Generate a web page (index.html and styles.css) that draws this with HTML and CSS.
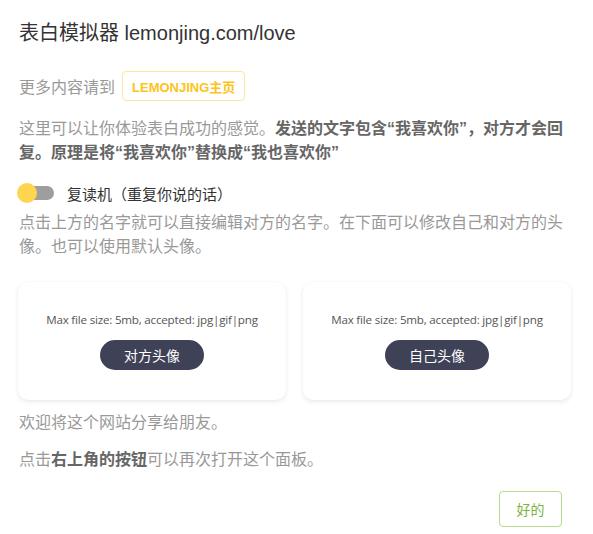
FILE: index.html
```html
<!DOCTYPE html>
<html lang="zh">
<head>
<meta charset="utf-8">
<title>表白模拟器</title>
<link rel="stylesheet" href="styles.css">
</head>
<body>
<div class="panel">
  <h1 class="title">表白模拟器 lemonjing.com/love</h1>
  <div class="more">
    <span>更多内容请到</span>
    <a class="badge">LEMONJING主页</a>
  </div>
  <p class="text intro">这里可以让你体验表白成功的感觉。<b>发送的文字包含“我喜欢你”，对方才会回复。原理是将“我喜欢你”替换成“我也喜欢你”</b></p>
  <label class="switch-row">
    <span class="switch"><span class="track"></span><span class="knob"></span></span>
    <span class="switch-label">复读机（重复你说的话）</span>
  </label>
  <p class="text tight">点击上方的名字就可以直接编辑对方的名字。在下面可以修改自己和对方的头像。也可以使用默认头像。</p>
  <div class="cards">
    <div class="card">
      <div class="hint">Max file size: 5mb, accepted: jpg|gif|png</div>
      <button class="upload">对方头像</button>
    </div>
    <div class="card">
      <div class="hint">Max file size: 5mb, accepted: jpg|gif|png</div>
      <button class="upload">自己头像</button>
    </div>
  </div>
  <p class="text share">欢迎将这个网站分享给朋友。</p>
  <p class="text reopen">点击<b>右上角的按钮</b>可以再次打开这个面板。</p>
  <div class="actions">
    <button class="ok">好的</button>
  </div>
</div>
</body>
</html>
```

FILE: styles.css
```css
* { box-sizing: border-box; }
html, body {
  margin: 0;
  padding: 0;
  background: #ffffff;
}
body {
  font-family: "Liberation Sans", "Noto Sans CJK SC", sans-serif;
  color: #999999;
}
.panel {
  width: 593px;
  padding: 20px 19px 0 19px;
}
.title {
  margin: 0;
  font-size: 20px;
  font-weight: normal;
  line-height: 26px;
  color: #333333;
}
.more {
  display: flex;
  align-items: center;
  gap: 7px;
  margin-top: 25px;
  font-size: 16px;
  color: #999999;
}
.badge {
  display: inline-flex;
  align-items: center;
  height: 30px;
  padding: 0 9px;
  border: 1px solid #fde6a0;
  border-radius: 4px;
  font-size: 13px;
  font-weight: bold;
  color: #fcc419;
}
.text {
  margin: 0;
  font-size: 16px;
  line-height: 24px;
  color: #999999;
}
.text b { color: #666666; }
.intro { margin-top: 16px; }
.switch-row {
  display: flex;
  align-items: center;
  gap: 13px;
  margin-top: 16px;
  height: 24px;
}
.switch {
  position: relative;
  width: 37px;
  height: 20px;
  flex: none;
  margin-left: -2px;
}
.track {
  position: absolute;
  left: 3px;
  top: 3px;
  width: 34px;
  height: 14px;
  border-radius: 7px;
  background: #9e9e9e;
}
.knob {
  position: absolute;
  left: 0;
  top: 0;
  width: 20px;
  height: 20px;
  border-radius: 50%;
  background: #fdd54f;
}
.switch-label {
  font-size: 15px;
  color: #333333;
}
.tight { margin-top: 6px; }
.cards {
  display: grid;
  grid-template-columns: 268px 268px;
  column-gap: 17px;
  margin-top: 23px;
  margin-left: -1px;
}
.card {
  height: 118px;
  border-radius: 10px;
  background: #ffffff;
  box-shadow: 0 2px 5px rgba(0, 0, 0, 0.08), 0 0 2px rgba(0, 0, 0, 0.04);
  display: flex;
  flex-direction: column;
  align-items: center;
  padding-top: 30px;
}
.hint {
  font-family: "Open Sans", "Liberation Sans", sans-serif;
  font-size: 11.6px;
  line-height: 16px;
  color: #555555;
  letter-spacing: -0.2px;
}
.upload {
  margin-top: 12px;
  width: 104px;
  height: 30px;
  border: none;
  border-radius: 15px;
  background: #3f4157;
  color: #ffffff;
  font-family: "Noto Sans CJK SC", sans-serif;
  font-size: 14px;
  cursor: pointer;
}
.share { margin-top: 11px; }
.reopen { margin-top: 13px; }
.actions {
  display: flex;
  justify-content: flex-end;
  margin-top: 19px;
  padding-right: 12px;
}
.ok {
  width: 63px;
  height: 36px;
  border: 1px solid #b8da90;
  border-radius: 4px;
  background: #ffffff;
  color: #7cb342;
  font-family: "Noto Sans CJK SC", sans-serif;
  font-size: 14px;
  cursor: pointer;
}
```
